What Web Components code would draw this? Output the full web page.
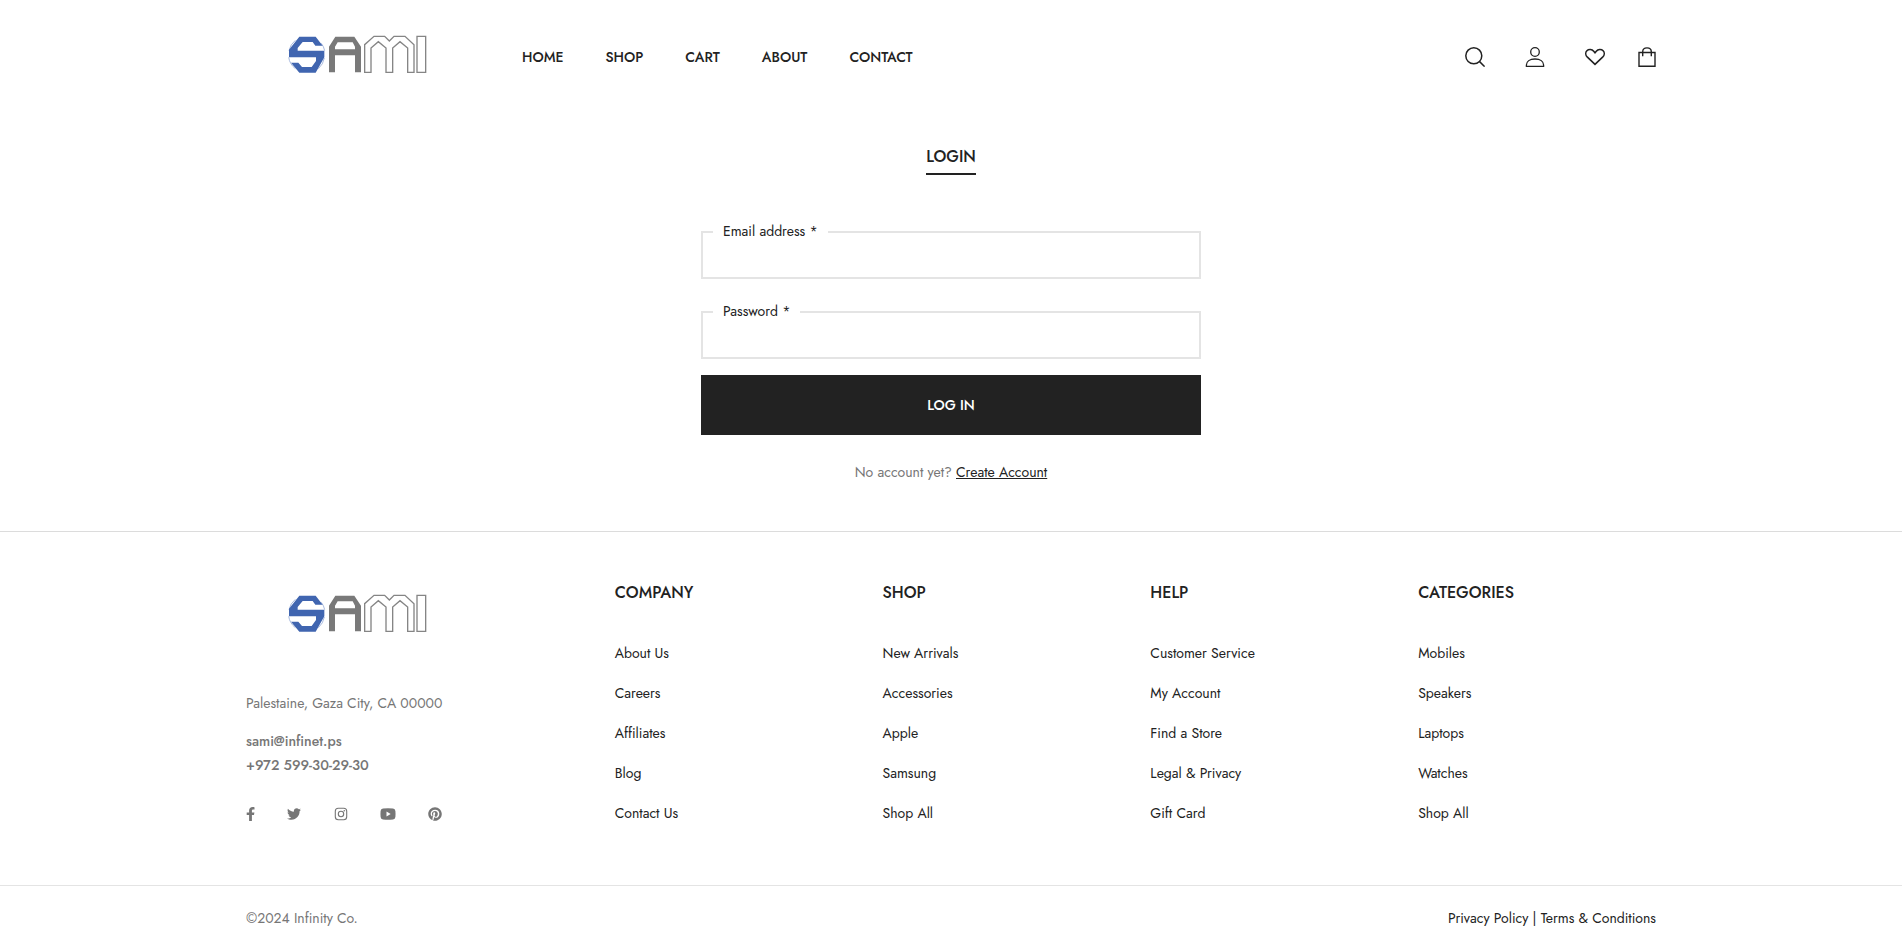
<!DOCTYPE html>
<html lang="en">
<head>
<meta charset="utf-8">
<meta name="viewport" content="width=device-width, initial-scale=1">
<title>Login</title>
<style>
  html { --ink: #222; --muted: #767676; --line: #e4e4e4; }
  body { margin: 0; background: #fff; color: var(--ink); font: 400 14px/24px Jost, Lato, sans-serif; }
</style>
</head>
<body>
<site-header></site-header>
<login-form></login-form>
<site-footer></site-footer>

<script>
const define = (name, html) => {
  const template = document.createElement('template');
  template.innerHTML = html;
  customElements.define(name, class extends HTMLElement {
    constructor() {
      super();
      this.attachShadow({ mode: 'open' }).append(template.content.cloneNode(true));
      if (this.setup) this.setup();
    }
  });
};

define('brand-logo', `
<style>
  :host { display: block; width: 216px; height: 48px; }
  a, svg { display: block; width: 100%; height: 100%; }
</style>
<a href="#" aria-label="Sami">
  <svg viewBox="-72 39 648 144" aria-hidden="true">
    <g fill="none" stroke="#a9bbdf" stroke-width="3">
      <path d="M76 61A54 54 0 0 0 57 92M154 70A54 54 0 0 1 164 92M56 112A54 54 0 0 0 76 146M163 114A54 54 0 0 1 145 146"/>
    </g>
    <path fill="#4065b0" d="M88 50H137L158 77H136L128 66H98L83 84V92H163V112L137 158H88L63 128H85L96 141H125L138 123V112H57V89Z"/>
    <path fill="#797979" fill-rule="evenodd" d="M177 157V80L196 50H253L273 80V157H255V106H195V157ZM195 88H255V80L248 67H203L195 80Z"/>
    <g fill="none" stroke="#858585" stroke-width="4">
      <path d="M284 157V74L312 49H344L358 63L372 49H405L432 74V157H413V84L390 65L368 84V157H348V84L325 65L303 84V157Z"/>
      <path d="M441 49H467V157H441Z"/>
    </g>
  </svg>
</a>`);

define('nav-link', `
<style>
  :host { display: block; }
  a { color: var(--ink); font-weight: 500; text-decoration: none; }
</style>
<a href="#"><slot></slot></a>`);

define('site-header', `
<style>
  :host { display: block; }
  header { display: flex; align-items: center; max-width: 1410px; margin: 0 auto; padding: 33px 15px; }
  nav { display: flex; gap: 42px; margin-left: 60px; }
  .tools { display: flex; gap: 33px; margin-left: auto; }
  .group { display: flex; gap: 40px; }
  button, .tools a { display: block; padding: 0; border: 0; background: none; color: var(--ink); cursor: pointer; }
  svg { display: block; fill: none; stroke: currentColor; }
</style>
<header>
  <brand-logo></brand-logo>
  <nav aria-label="Main">
    <nav-link>HOME</nav-link><nav-link>SHOP</nav-link><nav-link>CART</nav-link><nav-link>ABOUT</nav-link><nav-link>CONTACT</nav-link>
  </nav>
  <div class="tools">
    <div class="group">
      <button type="button" aria-label="Search"><svg width="20" height="20" viewBox="0 0 20 20" stroke-width="1.5"><circle cx="8.8" cy="8.8" r="8"/><path d="M14.6 14.6L19.6 19.6"/></svg></button>
      <a href="#" aria-label="Account"><svg width="20" height="20" viewBox="0 0 20 20" stroke-width="1.3"><circle cx="10" cy="5" r="4.3"/><path d="M1.4 19.3V18C1.4 14.5 4.7 12 10 12S18.600 14.500 18.600 18V19.300Z"/></svg></a>
      <a href="#" aria-label="Wishlist"><svg width="20" height="20" viewBox="0 0 20 20" stroke-width="1.600"><path d="M10 17.300L2.400 10.200C.4 8.200 .3 5.400 1.900 3.800 3.700 2 7 2.200 8.700 4.200L10 5.700 11.300 4.200C13 2.200 16.300 2 18.100 3.800 19.700 5.400 19.600 8.200 17.600 10.200Z"/></svg></a>
    </div>
    <a href="#" aria-label="Bag"><svg width="18" height="20" viewBox="0 0 18 20" stroke-width="1.400"><path d="M1 5.500H17V19.200H1ZM4.700 9.200V4.800C4.700-.4 13.300-.4 13.300 4.800V9.200"/></svg></a>
  </div>
</header>`);

define('login-form', `
<style>
  :host { display: block; max-width: 500px; margin: 0 auto; padding: 31px 15px 47px; }
  h2 { width: fit-content; margin: 0 auto 56px; padding-bottom: 4px; border-bottom: 2px solid var(--ink); font-size: 16px; font-weight: 500; line-height: 24px; }
  form { display: flex; flex-direction: column; }
  .field { position: relative; margin-bottom: 32px; }
  .field + .field { margin-bottom: 16px; }
  label { position: absolute; left: 12px; top: -12px; padding: 0 10px; background: #fff; }
  input { display: block; box-sizing: border-box; width: 100%; height: 48px; padding: 8px 20px; border: 2px solid var(--line); border-radius: 0; background: #fff; color: inherit; font: inherit; }
  button { height: 60px; border: 0; background: var(--ink); color: #fff; font: inherit; font-weight: 500; cursor: pointer; }
  p { margin: 25px 0 0; text-align: center; color: var(--muted); }
  p a { color: var(--ink); }
</style>
<h2>LOGIN</h2>
<form>
  <div class="field"><input id="email" type="email" autocomplete="email" required><label for="email">Email address *</label></div>
  <div class="field"><input id="password" type="password" autocomplete="current-password" required><label for="password">Password *</label></div>
  <button type="submit">LOG IN</button>
  <p>No account yet? <a href="#">Create Account</a></p>
</form>`);

define('footer-column', `
<style>
  :host { display: block; }
  h3 { margin: 0 0 36px; font-size: 16px; font-weight: 500; line-height: 24px; }
  div { display: flex; flex-direction: column; gap: 16px; }
  ::slotted(a) { color: var(--ink); text-decoration: none; }
</style>
<h3><slot name="title"></slot></h3>
<div><slot></slot></div>`);

define('social-links', `
<style>
  :host { display: flex; justify-content: space-between; max-width: 196px; }
  a { display: block; color: var(--muted); }
  svg { display: block; fill: currentColor; }
</style>
<a href="#" aria-label="Facebook"><svg width="9" height="14" viewBox="0 0 9 14"><path d="M8 8L8.400 5.400H5.900V3.800C5.900 3 6.200 2.400 7.300 2.400H8.500V.2C8.300.2 7.500 0 6.600 0 4.500 0 3.100 1.300 3.100 3.500V5.400H.7V8H3.100V14H5.900V8Z"/></svg></a>
<a href="#" aria-label="Twitter"><svg width="14" height="14" viewBox="0 0 512 512"><path d="M459.400 151.700c.3 4.500.3 9.100.3 13.600 0 138.700-105.600 298.600-298.600 298.600-59.500 0-114.700-17.200-161.100-47.100 8.400 1 16.600 1.300 25.300 1.300 49.100 0 94.200-16.600 130.300-44.800-46.100-1-84.800-31.200-98.100-72.800 6.500 1 13 1.600 19.800 1.600 9.400 0 18.800-1.300 27.600-3.600-48.100-9.700-84.100-52-84.100-103v-1.300c14 7.800 30.200 12.700 47.400 13.300-28.300-18.800-46.800-51-46.800-87.400 0-19.500 5.200-37.400 14.300-53 51.700 63.700 129.300 105.300 216.400 109.800-1.600-7.800-2.600-15.900-2.600-24 0-57.800 46.800-104.900 104.900-104.900 30.200 0 57.500 12.700 76.700 33.100 23.700-4.500 46.500-13.300 66.600-25.300-7.800 24.400-24.400 44.800-46.100 57.800 21.100-2.300 41.600-8.100 60.400-16.200-14.300 20.800-32.200 39.300-52.600 54.300z"/></svg></a>
<a href="#" aria-label="Instagram"><svg width="14" height="14" viewBox="0 0 14 14"><rect x="1.300" y="1.300" width="11.400" height="11.400" rx="3" fill="none" stroke="currentColor" stroke-width="1.100"/><circle cx="7" cy="7" r="2.700" fill="none" stroke="currentColor" stroke-width="1.100"/><circle cx="10.300" cy="3.700" r=".8"/></svg></a>
<a href="#" aria-label="YouTube"><svg width="16" height="14" viewBox="0 0 16 14"><path fill-rule="evenodd" d="M3 1.400Q8 1 13 1.400 15.200 1.600 15.400 4 15.700 7 15.400 10 15.200 12.400 13 12.500 8 12.900 3 12.500 .8 12.400 .6 10 .3 7 .6 4 .8 1.600 3 1.400ZM6.500 4.500V9.500L10.700 7Z"/></svg></a>
<a href="#" aria-label="Pinterest"><svg width="14" height="14" viewBox="0 0 496 512"><path d="M496 256c0 137-111 248-248 248-25.600 0-50.200-3.900-73.400-11.100 10.100-16.500 25.200-43.500 30.800-65 3-11.600 15.400-59 15.400-59 8.100 15.400 31.700 28.500 56.800 28.500 74.800 0 128.700-68.800 128.700-154.300 0-81.900-66.900-143.200-152.900-143.200-107 0-163.900 71.800-163.900 150.100 0 36.400 19.400 81.700 50.300 96.100 4.700 2.200 7.200 1.200 8.300-3.300.8-3.400 5-20.300 6.900-28.100.6-2.500.3-4.700-1.700-7.100-10.100-12.500-18.300-35.300-18.300-56.600 0-54.700 41.400-107.600 112-107.600 60.900 0 103.600 41.500 103.600 100.900 0 67.100-33.900 113.600-78 113.600-24.300 0-42.600-20.100-36.700-44.800 7-29.500 20.500-61.300 20.500-82.600 0-19-10.200-34.900-31.400-34.900-24.900 0-44.900 25.700-44.900 60.200 0 22 7.400 36.800 7.400 36.800s-24.500 103.800-29 123.200c-5 21.400-3 51.600-.9 71.200C65.400 450.900 0 361.100 0 256 0 119 111 8 248 8s248 111 248 248z"/></svg></a>`);

define('site-footer', `
<style>
  :host { display: block; }
  footer { border-top: 1px solid #dcdcdc; }
  .columns, .bar { max-width: 1410px; margin: 0 auto; padding: 0 15px; }
  .columns { display: grid; grid-template-columns: 339fr repeat(4, 238fr); column-gap: 30px; padding-top: 49px; padding-bottom: 60px; }
  .about { padding-top: 11px; color: var(--muted); }
  address { font-style: normal; }
  address p { margin: 51px 0 14px; }
  address a { display: block; width: fit-content; color: inherit; font-weight: 500; text-decoration: none; }
  social-links { margin-top: 30px; }
  .legal { border-top: 1px solid var(--line); }
  .bar { display: flex; justify-content: space-between; padding-top: 20px; padding-bottom: 9px; color: var(--muted); }
  .bar p { margin: 0; }
  .terms { color: var(--ink); }
  .terms a { color: inherit; text-decoration: none; }
</style>
<footer>
  <div class="columns">
    <div class="about">
      <brand-logo></brand-logo>
      <address>
        <p>Palestaine, Gaza City, CA 00000</p>
        <a href="#">sami@infinet.ps</a>
        <a href="#">+972 599-30-29-30</a>
      </address>
      <social-links></social-links>
    </div>
    <footer-column><span slot="title">COMPANY</span><a href="#">About Us</a><a href="#">Careers</a><a href="#">Affiliates</a><a href="#">Blog</a><a href="#">Contact Us</a></footer-column>
    <footer-column><span slot="title">SHOP</span><a href="#">New Arrivals</a><a href="#">Accessories</a><a href="#">Apple</a><a href="#">Samsung</a><a href="#">Shop All</a></footer-column>
    <footer-column><span slot="title">HELP</span><a href="#">Customer Service</a><a href="#">My Account</a><a href="#">Find a Store</a><a href="#">Legal &amp; Privacy</a><a href="#">Gift Card</a></footer-column>
    <footer-column><span slot="title">CATEGORIES</span><a href="#">Mobiles</a><a href="#">Speakers</a><a href="#">Laptops</a><a href="#">Watches</a><a href="#">Shop All</a></footer-column>
  </div>
  <div class="legal">
    <div class="bar">
      <p>©2024 Infinity Co.</p>
      <p class="terms"><a href="#">Privacy Policy</a> | <a href="#">Terms &amp; Conditions</a></p>
    </div>
  </div>
</footer>`);
</script>
</body>
</html>
